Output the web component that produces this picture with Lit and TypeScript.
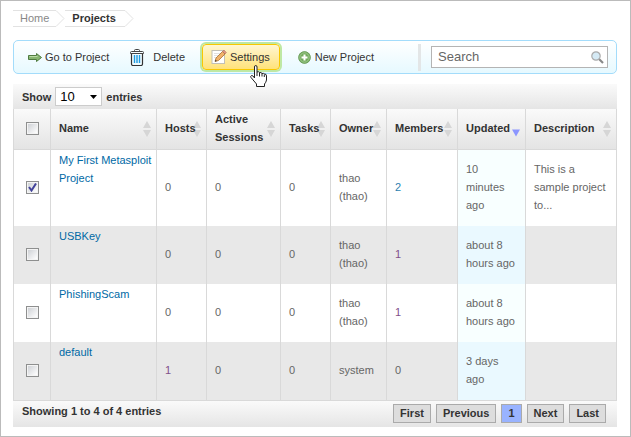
import { LitElement, html, css, svg, nothing } from "lit";
import { customElement, state } from "lit/decorators.js";
import { classMap } from "lit/directives/class-map.js";

interface Project {
  name: string;
  hosts: number;
  sessions: number;
  tasks: number;
  owner: string;
  members: number;
  updated: string;
  description: string;
  visited: string[];
  fresh: string[];
}

const PROJECTS: Project[] = [
  { name: "My First Metasploit Project", hosts: 0, sessions: 0, tasks: 0, owner: "thao (thao)", members: 2, updated: "10 minutes ago", description: "This is a sample project to...", visited: [], fresh: ["members"] },
  { name: "USBKey", hosts: 0, sessions: 0, tasks: 0, owner: "thao (thao)", members: 1, updated: "about 8 hours ago", description: "", visited: ["members"], fresh: [] },
  { name: "PhishingScam", hosts: 0, sessions: 0, tasks: 0, owner: "thao (thao)", members: 1, updated: "about 8 hours ago", description: "", visited: ["members"], fresh: [] },
  { name: "default", hosts: 1, sessions: 0, tasks: 0, owner: "system", members: 0, updated: "3 days ago", description: "", visited: ["hosts"], fresh: [] },
];

const COLUMNS = [
  { key: "name", label: "Name" },
  { key: "hosts", label: "Hosts" },
  { key: "sessions", label: "Active Sessions" },
  { key: "tasks", label: "Tasks" },
  { key: "owner", label: "Owner" },
  { key: "members", label: "Members" },
  { key: "updated", label: "Updated" },
  { key: "description", label: "Description" },
];

const arrowIcon = html`<svg width="14" height="9" viewBox="0 0 14 9" aria-hidden="true">
  <path d="M.5 2.500h8v-2l5 4-5 4v-2H.5z" fill="#86b672" stroke="#4f7b40"/>
  <path d="M1.500 3.500h8" stroke="#b9dba6"/>
</svg>`;

const trashIcon = html`<svg width="14" height="17" viewBox="0 0 14 17" fill="none" aria-hidden="true">
  <path d="M4.500 2.500V1.500q0-1 1-1h3q1 0 1 1v1M.5 4.500v-1q0-1 1-1h11q1 0 1 1v1z" stroke="#444"/>
  <path d="M1.500 5v10q0 1.500 1.500 1.500h8q1.500 0 1.500-1.500V5" stroke="#333" stroke-width="1.200"/>
  <path d="M4.500 6v8M7 6v8M9.500 6v8" stroke="#1d9be0" stroke-width="1.400"/>
</svg>`;

const editIcon = html`<svg width="16" height="16" viewBox="0 0 16 16" aria-hidden="true">
  <rect x="1" y="1.500" width="12.500" height="13" fill="#fff" stroke="#c2c0b6"/>
  <path d="M3 4.500h7M3 6.500h5M3 8.500h3" stroke="#e2e2e2"/>
  <path d="M4 12.500l1-3.500 6.500-6.500L14 5 7.500 11.500z" fill="#f0b26b" stroke="#a9702f" stroke-width=".8"/>
  <path d="M11.500 2.500L13 1.200 15.300 3.500 14 5z" fill="#e59a86" stroke="#a86a50" stroke-width=".6"/>
  <path d="M4 12.500l.5-1.800 1.300 1.300z" fill="#333"/>
</svg>`;

const addIcon = html`<svg width="13" height="13" viewBox="0 0 13 13" aria-hidden="true">
  <circle cx="6.500" cy="6.500" r="5.900" fill="#74ab60" stroke="#5f944d" stroke-width=".8"/>
  <circle cx="6.500" cy="6.500" r="4.700" fill="none" stroke="#a6cf95" stroke-width=".8"/>
  <path d="M6.500 3.500v6M3.500 6.500h6" stroke="#fff" stroke-width="2"/>
</svg>`;

const searchIcon = html`<svg width="13" height="13" viewBox="0 0 13 13" aria-hidden="true">
  <path d="M8 8l4 4" stroke="#888" stroke-width="2.200"/>
  <circle cx="5" cy="5" r="4.200" fill="#d5eaf5" stroke="#aaa" stroke-width="1.200"/>
</svg>`;

const handCursor = html`<svg class="pointer" width="17" height="22" viewBox="0 0 17 22" aria-hidden="true">
  <path d="M4.500 13V2q0-1.500 1.250-1.500T7 2v5q1.800-1 2.500.7 1.800-.7 2.500.8 1.800-.5 2.500 .5 2-.2 2 2v4q-.5 2.500-2 4v2.500h-8V19L1 12.500q-.8-1.500.5-2t3 2.500z" fill="#fff" stroke="#222"/>
  <path d="M7 7v4M9.500 7.700V11.500M12 8.500v3M14.300 9.500v2.500" stroke="#222"/>
</svg>`;

const sortIcon = (active: boolean) => html`<svg class="sort" width="8" height="16" viewBox="0 0 8 16" aria-hidden="true">
  ${active
    ? svg`<path d="M0 8.500h8L4 15.500z" fill="#8c96ff"/>`
    : svg`<path d="M0 7l4-7 4 7zM0 9h8l-4 7z" fill="#d6d6d6"/>`}
</svg>`;

const chevron = html`<svg width="9" height="17" viewBox="0 0 9 17" fill="none" aria-hidden="true">
  <path d="M0 .5l8 8-8 8" stroke="#e2e2e2"/>
</svg>`;

@customElement("app-root")
export class AppRoot extends LitElement {
  @state() private selected = new Set<string>([PROJECTS[0].name]);

  static styles = css`
    :host {
      display: block;
      box-sizing: border-box;
      border: 1px solid #bbb;
      padding: 9px 13px 9px 12px;
      background: #fff;
      color: #333;
      font: 11px/18px "Liberation Sans", Arial, sans-serif;
    }
    * { box-sizing: border-box; }
    button, input, select { font: inherit; color: inherit; margin: 0; }
    button { cursor: pointer; }
    a { color: #0069a5; text-decoration: none; }
    svg { display: block; flex: none; }

    .crumbs { display: flex; height: 17px; line-height: 17px; margin-bottom: 13px; }
    .crumb { display: flex; }
    .crumb-text {
      display: flex;
      align-items: center;
      border: solid #e2e2e2;
      border-width: 1px 0;
      padding: 0 7px;
      color: #888;
    }
    .crumb-text.current { padding-right: 9px; color: #333; font-weight: bold; }

    .toolbar {
      display: flex;
      align-items: center;
      height: 34px;
      border: 1px solid #a3dcfb;
      border-radius: 5px;
      padding: 0 8px 0 14px;
      background: linear-gradient(#fff, #e6f9ff);
    }
    .actions { display: flex; align-items: center; flex: 1; }
    .action {
      display: flex;
      align-items: center;
      gap: 3px;
      border: 0;
      padding: 0;
      background: none;
      white-space: nowrap;
    }
    .action.delete { gap: 9px; margin-left: 21px; }
    .action.new { gap: 4px; margin-left: 18px; }
    .action.settings {
      position: relative;
      margin-left: 17px;
      height: 26px;
      padding: 0 9px 0 8px;
      border: 1px solid #f8c800;
      border-radius: 4px;
      background: linear-gradient(#fff6d2, #ffe27a);
      box-shadow: 0 0 0 2px #bfe8a4;
    }
    .pointer { position: absolute; left: 47px; top: 20px; z-index: 1; }
    .search {
      display: flex;
      align-items: center;
      width: 177px;
      height: 22px;
      border: 1px solid #b4b4b4;
      padding: 0 3px 0 6px;
      background: #fff;
    }
    .search input {
      flex: 1;
      min-width: 0;
      border: 0;
      padding: 0;
      outline: none;
      background: none;
      font-size: 13px;
    }
    .search input::placeholder { color: #666; opacity: 1; }
    .divider { width: 3px; height: 27px; margin-right: 10px; background: #e3e6e7; }

    .bar {
      display: flex;
      align-items: center;
      font-weight: bold;
      background: linear-gradient(#fafafa, #e5e5e5);
    }
    .bar.top { height: 25px; margin-top: 10px; padding: 0 9px; }
    .bar.bottom { height: 26px; padding: 1px 11px 0 9px; justify-content: space-between; align-items: flex-start; }
    .length { display: flex; align-items: center; gap: 4px; }
    .select-box { position: relative; display: flex; }
    .length select {
      appearance: none;
      width: 47px;
      height: 19px;
      border: 1px solid #ccc;
      padding: 0 4px;
      background: #fff;
      color: #000;
      font-size: 13px;
      font-weight: normal;
      line-height: 17px;
    }
    .caret { position: absolute; right: 5px; top: 8px; pointer-events: none; }

    table {
      width: 100%;
      table-layout: fixed;
      border-collapse: separate;
      border-spacing: 0;
      border: solid #d9d9d9;
      border-width: 0 1px 1px 0;
    }
    .col-check { width: 37px; }
    .col-name { width: 106px; }
    .col-hosts, .col-tasks { width: 50px; }
    .col-sessions { width: 74px; }
    .col-owner { width: 56px; }
    .col-members { width: 71px; }
    .col-updated { width: 68px; }
    th, td { border-left: 1px solid #d9d9d9; text-align: left; }
    th {
      position: relative;
      height: 41px;
      padding: 0 0 2px;
      border-bottom: 1px solid #d9d9d9;
      background: linear-gradient(#fafafa, #e4e4e4);
    }
    .sorter {
      display: block;
      width: 100%;
      border: 0;
      padding: 0 8px;
      background: none;
      font-weight: bold;
      text-align: left;
    }
    .sort { position: absolute; right: 5px; top: 12px; }
    .label { position: relative; }
    td { height: 58px; padding: 0 8px 2px; color: #666; vertical-align: middle; }
    td.name { padding: 1px 4px 0 8px; vertical-align: top; }
    td.roomy { height: 76px; }
    td.updated { background: #f8ffff; }
    tr.even td { background: #e8e8e8; }
    tr.even td.updated { background: #eaf9ff; }
    th.check, td.check { padding: 0 0 2px; }
    .visited { color: #80508a; }
    .fresh { color: #2d7fb0; }
    input[type="checkbox"] {
      appearance: none;
      display: block;
      width: 13px;
      height: 13px;
      margin: 0 auto;
      border: 1px solid #8e8f8f;
      background: linear-gradient(135deg, #cfd2d6, #fff) content-box, #f4f4f4;
      padding: 1px;
    }
    .tick { position: relative; display: block; width: 13px; height: 13px; margin: 0 auto; }
    .tick svg { position: absolute; left: 2px; top: 2px; pointer-events: none; }

    .pages { display: flex; gap: 5px; padding-top: 2px; }
    .page {
      height: 19px;
      border: 1px solid #aaa;
      padding: 0 6px;
      background: #ddd;
      font-weight: bold;
      line-height: 17px;
    }
    .page.current { background: #99b3ff; }
  `;

  private toggle(name: string) {
    const next = new Set(this.selected);
    next.has(name) ? next.delete(name) : next.add(name);
    this.selected = next;
  }

  private toggleAll(e: Event) {
    this.selected = (e.target as HTMLInputElement).checked
      ? new Set(PROJECTS.map((p) => p.name))
      : new Set();
  }

  private renderCheck(label: string, checked: boolean, onChange: (e: Event) => void) {
    return html`<span class="tick">
      <input type="checkbox" aria-label=${label} .checked=${checked} @change=${onChange}>
      ${checked
        ? html`<svg width="9" height="9" viewBox="0 0 9 9" aria-hidden="true"><path d="M1 4l2.500 3.500L8 .5" fill="none" stroke="#42429a" stroke-width="2"/></svg>`
        : nothing}
    </span>`;
  }

  private renderCell(p: Project, key: string) {
    const value = p[key as keyof Project];
    const roomy = p.description !== "";
    if (key === "name") return html`<td class=${classMap({ name: true, roomy })}><a href="#">${value}</a></td>`;
    const link = p.visited.includes(key) ? "visited" : p.fresh.includes(key) ? "fresh" : "";
    return html`<td class=${classMap({ roomy, updated: key === "updated" })}>
      ${link ? html`<a class=${link} href="#">${value}</a>` : value}
    </td>`;
  }

  render() {
    return html`
      <nav class="crumbs" aria-label="Breadcrumb">
        <span class="crumb"><a class="crumb-text" href="#">Home</a>${chevron}</span>
        <span class="crumb"><span class="crumb-text current">Projects</span>${chevron}</span>
      </nav>

      <div class="toolbar">
        <div class="actions">
          <button class="action">${arrowIcon}Go to Project</button>
          <button class="action delete">${trashIcon}Delete</button>
          <button class="action settings">${editIcon}Settings${handCursor}</button>
          <button class="action new">${addIcon}New Project</button>
        </div>
        <span class="divider"></span>
        <label class="search">
          <input type="text" placeholder="Search" aria-label="Search">${searchIcon}
        </label>
      </div>

      <div class="bar top">
        <label class="length">Show
          <span class="select-box">
            <select><option>10</option><option>25</option><option>50</option></select>
            <svg class="caret" width="7" height="4" viewBox="0 0 7 4" aria-hidden="true"><path d="M0 0h7L3.500 4z"/></svg>
          </span>
          entries</label>
      </div>

      <table>
        <colgroup>
          <col class="col-check">
          ${COLUMNS.map((c) => html`<col class="col-${c.key}">`)}
        </colgroup>
        <thead>
          <tr>
            <th class="check">${this.renderCheck("Select all", this.selected.size === PROJECTS.length, (e) => this.toggleAll(e))}</th>
            ${COLUMNS.map((c) => html`<th>
              <button class="sorter">${sortIcon(c.key === "updated")}<span class="label">${c.label}</span></button>
            </th>`)}
          </tr>
        </thead>
        <tbody>
          ${PROJECTS.map((p, i) => html`<tr class=${i % 2 ? "even" : "odd"}>
            <td class="check">${this.renderCheck(`Select ${p.name}`, this.selected.has(p.name), () => this.toggle(p.name))}</td>
            ${COLUMNS.map((c) => this.renderCell(p, c.key))}
          </tr>`)}
        </tbody>
      </table>

      <div class="bar bottom">
        <span>Showing 1 to 4 of 4 entries</span>
        <div class="pages">
          ${["First", "Previous", "1", "Next", "Last"].map(
            (t) => html`<button class=${classMap({ page: true, current: t === "1" })}>${t}</button>`
          )}
        </div>
      </div>
    `;
  }
}
